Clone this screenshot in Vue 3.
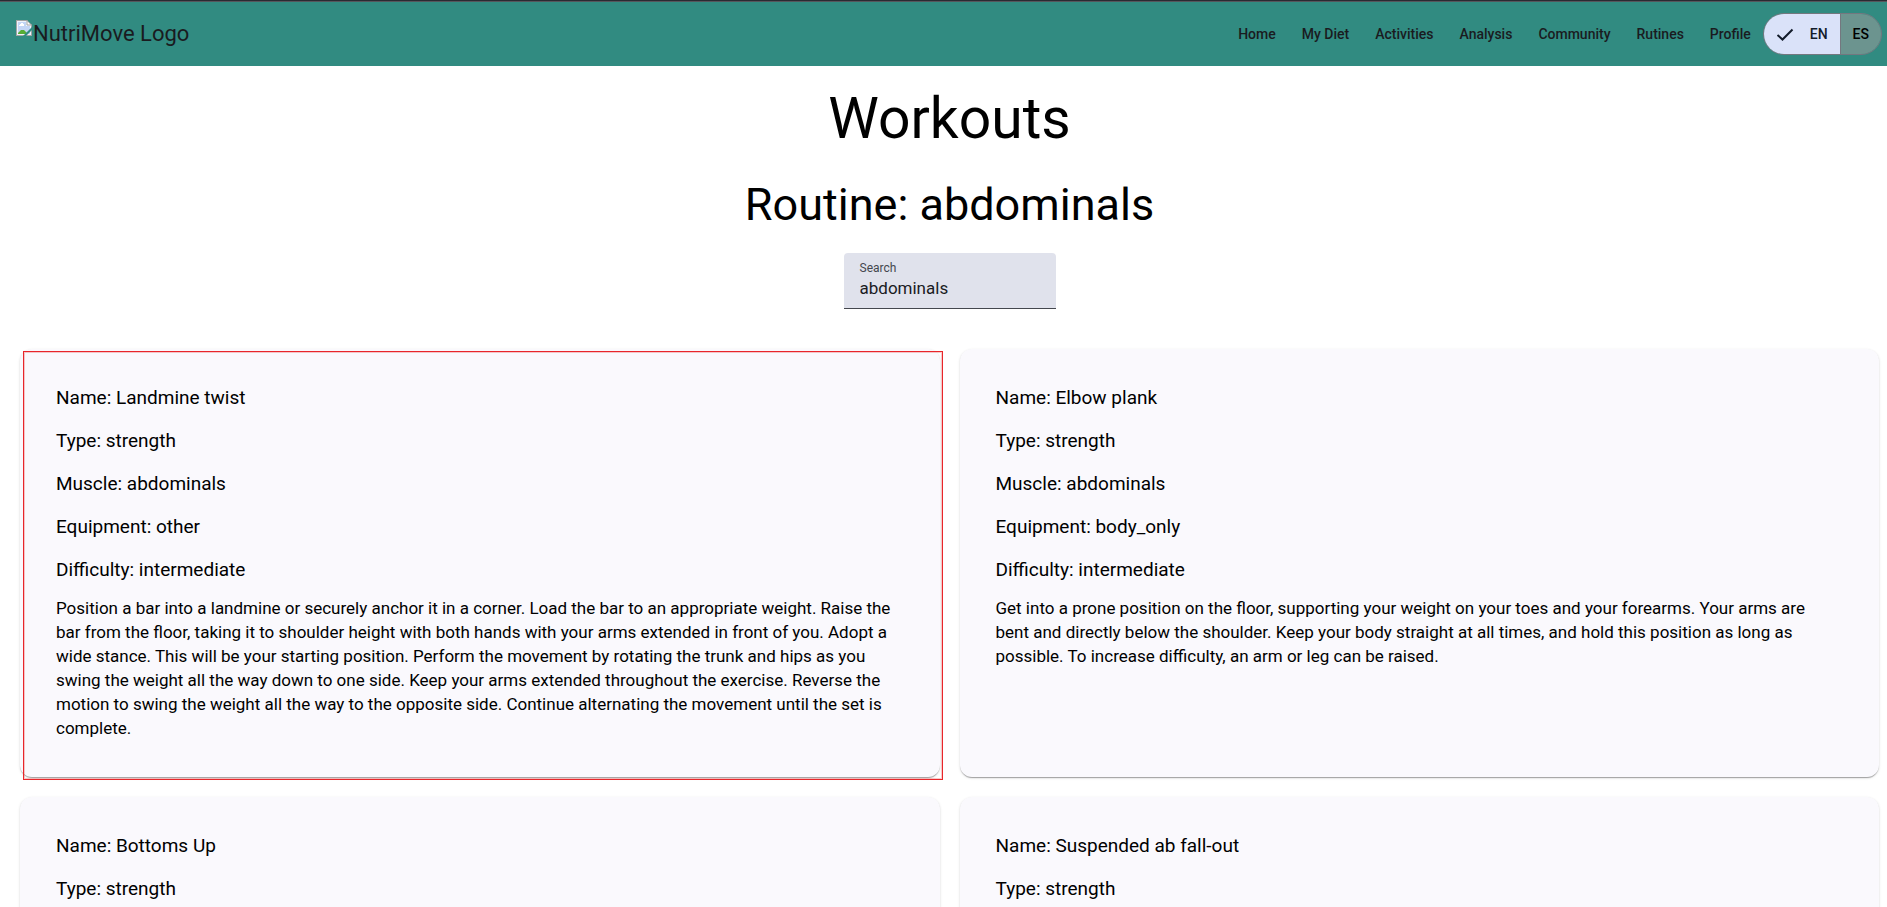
<script setup>
import { ref } from 'vue'

const links = ['Home', 'My Diet', 'Activities', 'Analysis', 'Community', 'Rutines', 'Profile']
const language = ref('EN')
const search = ref('abdominals')

const workouts = [
  {
    facts: [
      ['Name', 'Landmine twist'],
      ['Type', 'strength'],
      ['Muscle', 'abdominals'],
      ['Equipment', 'other'],
      ['Difficulty', 'intermediate'],
    ],
    text: 'Position a bar into a landmine or securely anchor it in a corner. Load the bar to an appropriate weight. Raise the bar from the floor, taking it to shoulder height with both hands with your arms extended in front of you. Adopt a wide stance. This will be your starting position. Perform the movement by rotating the trunk and hips as you swing the weight all the way down to one side. Keep your arms extended throughout the exercise. Reverse the motion to swing the weight all the way to the opposite side. Continue alternating the movement until the set is complete.',
    marked: true,
  },
  {
    facts: [
      ['Name', 'Elbow plank'],
      ['Type', 'strength'],
      ['Muscle', 'abdominals'],
      ['Equipment', 'body_only'],
      ['Difficulty', 'intermediate'],
    ],
    text: 'Get into a prone position on the floor, supporting your weight on your toes and your forearms. Your arms are bent and directly below the shoulder. Keep your body straight at all times, and hold this position as long as possible. To increase difficulty, an arm or leg can be raised.',
  },
  { facts: [['Name', 'Bottoms Up'], ['Type', 'strength']] },
  { facts: [['Name', 'Suspended ab fall-out'], ['Type', 'strength']] },
]
</script>

<template>
  <div class="page">
    <header class="toolbar">
      <a class="logo" href="#">
        <svg class="broken" viewBox="0 0 16 16" width="16" height="16" aria-hidden="true">
          <path d="M0 0H11L16 5V16H0Z" fill="#a3a3a3" />
          <path d="M1 1H11V5H15V15H1Z" fill="#eef3fc" />
          <path d="M2 2H10V6H14V14H2Z" fill="#c3d5f5" />
          <path d="M3 6V5H4V4H5V3H7V4H8V6Z" fill="#fff" />
          <path d="M2 14V13L5 10H8L11 13V14Z" fill="#56ad36" />
          <path d="M11 1L15 5H11Z" fill="#fff" />
          <path d="M11 0V5H16" fill="none" stroke="#a3a3a3" />
          <path d="M16 7V10L10 16H7Z" fill="#318b81" />
        </svg>
        <span>NutriMove Logo</span>
      </a>
      <nav class="nav">
        <a v-for="link in links" :key="link" class="nav-link" href="#">{{ link }}</a>
      </nav>
      <div class="toggle" role="group" aria-label="Language">
        <button
          v-for="code in ['EN', 'ES']"
          :key="code"
          type="button"
          class="segment"
          :class="{ selected: language === code }"
          :aria-pressed="language === code"
          @click="language = code"
        >
          <svg v-if="language === code" viewBox="0 0 18 18" width="18" height="18" aria-hidden="true">
            <path d="M1.5 10L6.5 14.5L16.5 4.5" fill="none" stroke="#131c2b" stroke-width="2" />
          </svg>
          {{ code }}
        </button>
      </div>
    </header>

    <main class="content">
      <h1 class="title">Workouts</h1>
      <h2 class="subtitle">Routine: {{ search }}</h2>
      <div class="field">
        <label for="search">Search</label>
        <input id="search" v-model="search" type="text" />
      </div>
      <section class="grid">
        <article v-for="workout in workouts" :key="workout.facts[0][1]" class="card" :class="{ marked: workout.marked }">
          <h3 v-for="[name, value] in workout.facts" :key="name" class="fact">{{ name }}: {{ value }}</h3>
          <p v-if="workout.text" class="text">{{ workout.text }}</p>
        </article>
      </section>
    </main>
  </div>
</template>

<style>
body {
  margin: 0;
  background: #fff;
}
</style>

<style scoped>
.page {
  box-sizing: border-box;
  height: 100vh;
  overflow: hidden;
  border-top: 1px solid #2a2a32;
  font-family: Roboto, 'Liberation Sans', sans-serif;
  color: #000;
}

.toolbar {
  display: flex;
  align-items: center;
  box-sizing: border-box;
  height: 65px;
  padding: 0 5px 0 16px;
  border-top: 1px solid #55565c;
  background: #318b81;
  color: #1a1b1f;
}

.logo {
  display: flex;
  align-items: center;
  gap: 1px;
  margin-right: auto;
  color: inherit;
  font-size: 22px;
  line-height: 28px;
  text-decoration: none;
}

.broken {
  margin-bottom: 12px;
}

.nav {
  display: flex;
  gap: 2px;
}

.nav-link {
  padding: 0 12px;
  color: inherit;
  font-size: 14px;
  font-weight: 500;
  line-height: 40px;
  text-decoration: none;
}

.toggle {
  display: flex;
  overflow: hidden;
  border: 1px solid #74777f;
  border-radius: 21px;
}

.segment {
  display: flex;
  align-items: center;
  gap: 16px;
  height: 40px;
  padding: 0 12px;
  border: 0;
  background: #6c948f;
  color: #000;
  font: 500 14px/40px Roboto, 'Liberation Sans', sans-serif;
}

.segment + .segment {
  border-left: 1px solid #74777f;
}

.segment.selected {
  background: #dae2f9;
  color: #131c2b;
}

.content {
  display: flex;
  flex-direction: column;
  align-items: center;
  padding: 21px 8px 20px 20px;
}

.title {
  margin: 0;
  font-size: 57px;
  font-weight: 400;
  line-height: 64px;
}

.subtitle {
  margin: 28px 0 0;
  font-size: 45px;
  font-weight: 400;
  line-height: 52px;
}

.field {
  display: flex;
  flex-direction: column;
  box-sizing: border-box;
  width: 212px;
  height: 56px;
  margin: 22px 0 40px;
  padding: 7px 16px;
  border-bottom: 1px solid #44474e;
  border-radius: 4px 4px 0 0;
  background: #e0e2ec;
}

.field label {
  color: #44474e;
  font-size: 12px;
  line-height: 16px;
}

.field input {
  width: 100%;
  padding: 0;
  border: 0;
  outline: 0;
  background: transparent;
  color: #1a1b1f;
  font: 17px/24px Roboto, 'Liberation Sans', sans-serif;
}

.grid {
  display: grid;
  grid-template-columns: 1fr 1fr;
  grid-auto-rows: 1fr;
  gap: 20px;
  width: 100%;
}

.card {
  position: relative;
  padding: 37px 40px 37px 36px;
  border-radius: 12px;
  background: #faf9fd;
  box-shadow:
    0 2px 1px -1px rgba(0, 0, 0, 0.2),
    0 1px 1px rgba(0, 0, 0, 0.14),
    0 1px 3px rgba(0, 0, 0, 0.12);
}

.marked::after {
  content: '';
  position: absolute;
  inset: 2px -3px -3px 3px;
  border: 1px solid #e8262a;
  box-shadow: inset 0 0 0 1px rgba(232, 38, 42, 0.25);
  pointer-events: none;
}

.fact {
  margin: 0;
  font-size: 19px;
  font-weight: 400;
  line-height: 24px;
}

.fact + .fact {
  margin-top: 19px;
}

.text {
  margin: 14px 0 0;
  font-size: 17px;
  line-height: 24px;
}
</style>
